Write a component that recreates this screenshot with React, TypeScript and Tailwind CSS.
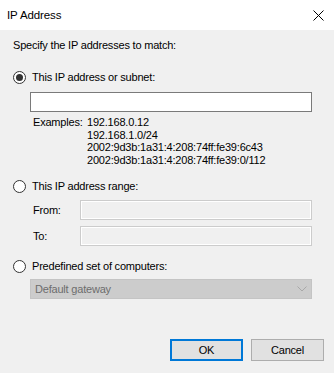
import React from 'react';

function Radio({ checked, label }: { checked?: boolean; label: string }) {
  return (
    <div className="flex h-[14px] items-center gap-[6px]">
      <span className="flex h-[13px] w-[13px] shrink-0 items-center justify-center rounded-full border border-[#333333] bg-white">
        {checked && <span className="h-[7px] w-[7px] rounded-full bg-[#333333]" />}
      </span>
      <span>{label}</span>
    </div>
  );
}

function RangeRow({ label }: { label: string }) {
  return (
    <div className="ml-[20px] mr-[12px] flex h-[20px] items-center">
      <span className="w-[47px] shrink-0">{label}</span>
      <div className="h-full flex-1 border border-[#cccccc] bg-[#f0f0f0] shadow-[inset_0_0_0_1px_#ffffff]" />
    </div>
  );
}

export default function App() {
  const examples = ['192.168.0.12', '192.168.1.0/24', '2002:9d3b:1a31:4:208:74ff:fe39:6c43', '2002:9d3b:1a31:4:208:74ff:fe39:0/112'];

  return (
    <div className="flex h-[373px] w-[334px] flex-col overflow-hidden bg-[#f0f0f0] font-['Liberation_Sans',Arial,sans-serif] text-[11px] leading-[14px] tracking-[-0.2px] text-black">
      <div className="flex h-[30px] shrink-0 items-center justify-between bg-white pl-[7px] pr-[7px]">
        <span className="text-[11.5px] tracking-[-0.1px]">IP Address</span>
        <svg width="11" height="11" viewBox="0 0 11 11" className="mr-[3px]">
          <path d="M0.5 0.5 L10.5 10.5 M10.5 0.5 L0.5 10.5" stroke="#000" strokeWidth="1" />
        </svg>
      </div>

      <div className="flex flex-1 flex-col pl-[13px] pr-[10px] pt-[8px]">
        <p>Specify the IP addresses to match:</p>

        <div className="mt-[18px]">
          <Radio checked label="This IP address or subnet:" />
        </div>
        <div className="ml-[17px] mr-[12px] mt-[8px] h-[20px] border border-[#7a7a7a] bg-white" />

        <div className="ml-[20px] mt-[4px] flex leading-[12.5px]">
          <span className="w-[54px] shrink-0">Examples:</span>
          <div className="flex flex-col">
            {examples.map((e) => (
              <span key={e}>{e}</span>
            ))}
          </div>
        </div>

        <div className="mt-[13px]">
          <Radio label="This IP address range:" />
        </div>
        <div className="mt-[7px]">
          <RangeRow label="From:" />
        </div>
        <div className="mt-[6px]">
          <RangeRow label="To:" />
        </div>

        <div className="mt-[13px]">
          <Radio label="Predefined set of computers:" />
        </div>
        <div className="ml-[17px] mr-[12px] mt-[6px] flex h-[20px] items-center justify-between border border-[#c4c4c4] bg-[#cccccc] pl-[4px] pr-[4px] text-[#6d6d6d]">
          <span>Default gateway</span>
          <svg width="10" height="6" viewBox="0 0 10 6">
            <path d="M0.5 0.5 L5 5 L9.5 0.5" fill="none" stroke="#a8a8a8" strokeWidth="1" />
          </svg>
        </div>

        <div className="mt-[40px] flex justify-end gap-[8px]">
          <button className="h-[22px] w-[73px] border-2 border-[#0078d7] bg-[#e1e1e1]">OK</button>
          <button className="h-[22px] w-[73px] border border-[#adadad] bg-[#e1e1e1]">Cancel</button>
        </div>
      </div>
    </div>
  );
}
